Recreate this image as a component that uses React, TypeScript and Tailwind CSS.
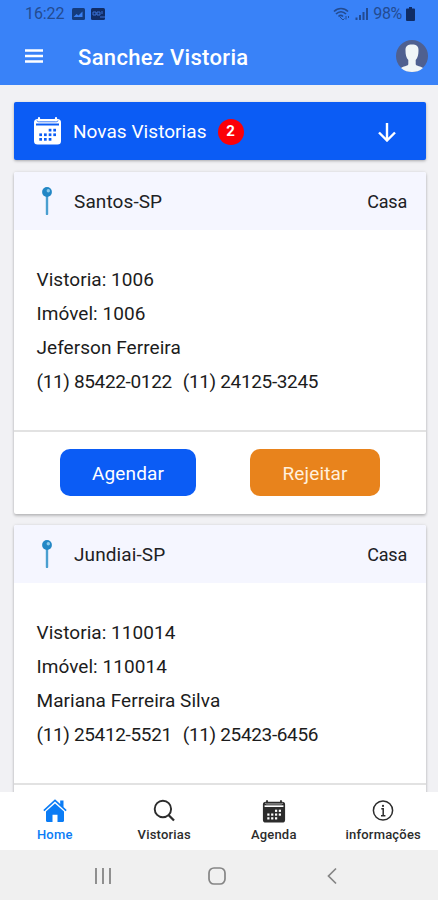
import React from 'react';

interface Inspection {
  city: string;
  kind: string;
  code: number;
  client: string;
  phones: string[];
  showActions: boolean;
}

const inspections: Inspection[] = [
  {
    city: 'Santos-SP',
    kind: 'Casa',
    code: 1006,
    client: 'Jeferson Ferreira',
    phones: ['(11) 85422-0122', '(11) 24125-3245'],
    showActions: true,
  },
  {
    city: 'Jundiai-SP',
    kind: 'Casa',
    code: 110014,
    client: 'Mariana Ferreira Silva',
    phones: ['(11) 25412-5521', '(11) 25423-6456'],
    showActions: false,
  },
];

const CalendarIcon = ({ className, hole }: { className: string; hole: string }) => (
  <svg viewBox="0 0 28 28" className={className}>
    <path d="M5.5 1.2v3M22.5 1.2v3" stroke="currentColor" strokeWidth="2.2" strokeLinecap="round" />
    <rect x="0.5" y="2" width="27" height="25.5" rx="3.5" fill="currentColor" />
    <path d="M3.500 3.500c0 .9.800 1.300 2.300 1.300h16.400c1.500 0 2.300-.4 2.300-1.300" fill="none" stroke={hole} strokeWidth="0.800" />
    <path d="M2.500 7.500h23" stroke={hole} strokeWidth="2" />
    <g fill={hole}>
      <rect x="15.200" y="11.800" width="2.700" height="2.700" />
      <rect x="19.800" y="11.800" width="2.700" height="2.700" />
      <rect x="5.800" y="16.400" width="2.700" height="2.700" />
      <rect x="10.500" y="16.400" width="2.700" height="2.700" />
      <rect x="15.200" y="16.400" width="2.700" height="2.700" />
      <rect x="19.800" y="16.400" width="2.700" height="2.700" />
      <rect x="5.800" y="21" width="2.700" height="2.700" />
      <rect x="10.500" y="21" width="2.700" height="2.700" />
      <rect x="15.200" y="21" width="2.700" height="2.700" />
    </g>
  </svg>
);

const PinIcon = () => (
  <svg viewBox="0 0 12 28" className="w-3 h-7">
    <path d="M6 9v18" stroke="#4a9fd0" strokeWidth="2.400" strokeLinecap="round" />
    <circle cx="6" cy="5" r="4.900" fill="#2387c5" />
    <circle cx="7.300" cy="3.800" r="1.700" fill="#8fcbea" />
  </svg>
);

const HomeIcon = () => (
  <svg viewBox="0 0 24 24" className="w-6 h-6" fill="currentColor">
    <path d="M12 0.300 0.300 11l1.100 1.200L12 2.600l10.600 9.600 1.100-1.200L20.500 8V1.500h-3.300v3.600z" />
    <path d="M12 4.400 3 12.500V21.800c0 .7.500 1.200 1.200 1.200h5.300V15.800h5V23h5.300c.7 0 1.200-.5 1.200-1.200v-9.300z" />
  </svg>
);

const SearchIcon = () => (
  <svg viewBox="0 0 24 24" className="w-6 h-6" fill="none" stroke="currentColor">
    <circle cx="10.900" cy="10" r="8.200" strokeWidth="1.900" />
    <path d="m16.500 16 5.500 5.500" strokeWidth="2.300" />
  </svg>
);

const InfoIcon = () => (
  <svg viewBox="0 0 24 24" className="w-6 h-6" fill="none" stroke="currentColor" strokeWidth="1.500">
    <circle cx="12" cy="11.500" r="9.600" />
    <path d="M10.300 9.800h1.900v6.700M10 16.700h4.400" />
    <circle cx="12" cy="6.900" r="1.100" fill="currentColor" stroke="none" />
  </svg>
);

const StatusBar = () => (
  <div className="flex h-7 items-center pl-[25px] pr-[23px] text-[16px] text-[#234b91]">
    <span className="tracking-[-0.1px]">16:22</span>
    <svg viewBox="0 0 34 12" className="ml-2 h-3 w-[34px]">
      <rect width="13" height="12" rx="1.500" fill="#143b7d" />
      <path d="m1.500 9 3-3 2 1.500 4-4V9z" fill="#3a80f2" />
      <rect x="19" width="14" height="12" rx="1.500" fill="#102c66" />
      <path d="M21 4h3v3h-3zM25 4h3v3h-3zM30 3v3M28 9h5" fill="none" stroke="#3a70d4" />
    </svg>
    <svg viewBox="0 0 36 14" className="ml-auto h-3.5 w-9" fill="none" stroke="currentColor">
      <path d="M1 4.500c4-4 10-4 14 0M3 7c3-3 7-3 10 0M5.500 9.500c1.500-1.500 3-1.500 4.500 0" strokeWidth="1.700" />
      <path d="m7 10 3 3 1.500-1.500M13 9v3.500m2.500-3.500v2" />
      <path d="M23.500 13v-2.500M27 13V8M30.500 13V5M34 13V1" strokeWidth="2" />
    </svg>
    <span className="ml-1 tracking-[-0.3px]">98%</span>
    <svg viewBox="0 0 9 14" className="ml-1 h-3.5 w-[9px]" fill="#0f2c66">
      <path d="M3 0h3v1.500h2q1 0 1 1V13q0 1-1 1H1q-1 0-1-1V2.500q0-1 1-1h2z" />
    </svg>
  </div>
);

const Header = () => (
  <header className="flex h-[57px] items-center pl-[25px] pr-[10px] text-white">
    <svg viewBox="0 0 18 14" className="-mt-px h-3.5 w-[18px]" stroke="currentColor" strokeWidth="2.600">
      <path d="M0 1.500h18M0 7h18M0 12.500h18" />
    </svg>
    <h1 className="ml-[35px] pt-0.5 text-[22px] font-medium tracking-[0.32px]">Sanchez Vistoria</h1>
    <svg viewBox="0 0 32 32" className="-mt-px ml-auto h-8 w-8">
      <circle cx="16" cy="16" r="16" fill="#4f6090" />
      <path
        d="M9.500 10.500C9.300 6.300 11.500 4.500 16 4.500s6.700 1.800 6.500 6c0 4-.8 7.500-2.800 9.500v4.300c.5 2 5.600 2 7.300 3.700C23.500 31 20 32 16 32S8.500 31 5 28c1.700-1.700 6.800-1.700 7.300-3.700V20c-2-2-2.800-5.500-2.800-9.500z"
        fill="#f0f5f7"
      />
    </svg>
  </header>
);

const InspectionCard: React.FC<{ item: Inspection }> = ({ item }) => (
  <article className="shrink-0 rounded-xs bg-white shadow-[0_2px_3px_rgba(0,0,0,0.2),0_0_3px_rgba(0,0,0,0.12)]">
    <div className="flex h-[58px] items-center rounded-t-xs bg-[#f5f6ff] pl-[27px] pr-[19px] text-[#202124]">
      <PinIcon />
      <span className="ml-[21px] pt-0.5 text-[19px] tracking-[0.1px]">{item.city}</span>
      <span className="ml-auto pt-px text-[18px] tracking-[-0.2px]">{item.kind}</span>
    </div>
    <div className="h-[200px] pl-[22.5px] pt-[33px] text-[19px] leading-[34px] tracking-[0.05px] text-[#1c1c1c]">
      <p>Vistoria: {item.code}</p>
      <p>Imóvel: {item.code}</p>
      <p>{item.client}</p>
      <p className="flex gap-[11px] tracking-[-0.35px]">
        {item.phones.map((phone) => (
          <span key={phone}>{phone}</span>
        ))}
      </p>
    </div>
    <div className="flex h-[84px] gap-[54px] border-t-2 border-[#e2e2e2] pl-[46px] pt-[17px] text-[19px] tracking-[0.15px] text-white">
      {item.showActions && (
        <>
          <button className="h-[47px] w-[136px] rounded-[10px] bg-[#0b5cf5] pt-[3px]">Agendar</button>
          <button className="h-[47px] w-[130px] rounded-[10px] bg-[#e8831c] pt-[3px] text-[#fff0dc]">Rejeitar</button>
        </>
      )}
    </div>
  </article>
);

const tabs = [
  { label: 'Home', icon: <HomeIcon />, active: true },
  { label: 'Vistorias', icon: <SearchIcon />, active: false },
  { label: 'Agenda', icon: <CalendarIcon className="h-[23px] w-6" hole="#fff" />, active: false },
  { label: 'informações', icon: <InfoIcon />, active: false },
];

const App: React.FC = () => {
  return (
    <div className="flex h-[900px] w-full flex-col overflow-hidden bg-[#f1f1f4] font-['Roboto',sans-serif]">
      <div className="shrink-0 bg-[#3982f8]">
        <StatusBar />
        <Header />
      </div>

      <main className="flex min-h-0 flex-1 flex-col overflow-hidden pl-[14px] pr-[12px] pt-[17px]">
        <div className="flex h-[58px] shrink-0 items-center rounded-xs bg-[#0b5cf5] pl-[19px] pr-[29px] text-white shadow-[0_1px_3px_rgba(0,0,0,0.3)]">
          <CalendarIcon className="h-[28px] w-[29px]" hole="#0b5cf5" />
          <span className="ml-[11px] pt-[3px] text-[19px] tracking-[0.05px]">Novas Vistorias</span>
          <span className="ml-[11px] mt-px flex h-[26px] w-[26px] items-center justify-center rounded-full bg-[#fb0007] text-[15px] font-bold">2</span>
          <svg viewBox="0 0 20 20" className="ml-auto mt-px h-5 w-5" fill="none" stroke="currentColor" strokeWidth="2.400">
            <path d="M10 1v17M2 10.500l8 8 8-8" />
          </svg>
        </div>
        <div className="mt-3 flex flex-col gap-[11px]">
          {inspections.map((item) => (
            <InspectionCard key={item.code} item={item} />
          ))}
        </div>
      </main>

      <nav className="z-10 grid h-[58px] shrink-0 grid-cols-4 bg-white">
        {tabs.map((tab) => (
          <button
            key={tab.label}
            className={`flex flex-col items-center pt-[7px] text-[13px] font-medium ${tab.active ? 'text-[#0b7cf5]' : 'text-[#2c2c2c]'}`}
          >
            <span className="flex h-6 items-center">{tab.icon}</span>
            <span className="mt-0.5 leading-5 tracking-[0.2px]">{tab.label}</span>
          </button>
        ))}
      </nav>

      <div className="flex h-[50px] shrink-0 items-center bg-[#f0f0f0] pl-[94px] pt-0.5 text-[#858585]">
        <svg viewBox="0 0 18 18" className="h-[18px] w-[18px]" stroke="currentColor" strokeWidth="1.800">
          <path d="M2 1v16M9 1v16M16 1v16" />
        </svg>
        <svg viewBox="0 0 18 18" className="ml-24 h-[18px] w-[18px]" fill="none" stroke="currentColor" strokeWidth="1.700">
          <rect x="1" y="1" width="16" height="16" rx="5" />
        </svg>
        <svg viewBox="0 0 10 18" className="ml-[101px] h-[18px] w-[10px]" fill="none" stroke="currentColor" strokeWidth="1.700">
          <path d="M9 1.500 1.500 9 9 16.500" />
        </svg>
      </div>
    </div>
  );
};

export default App;
